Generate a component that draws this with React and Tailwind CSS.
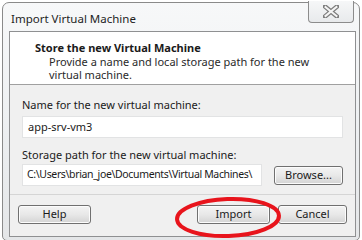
import React from "react";

const Btn = ({ children, className = "" }) => (
  <div
    className={
      "h-[19px] rounded-[3px] border border-[#707070] bg-gradient-to-b from-[#f4f4f4] via-[#e8e8e8] to-[#d4d4d4] flex items-center justify-center text-[11px] text-[#1a1a1a] shadow-[inset_0_0_0_1px_#fcfcfc] " +
      className
    }
  >
    {children}
  </div>
);

export default function App() {
  return (
    <div
      className="w-[362px] h-[240px] bg-white relative overflow-hidden"
      style={{ fontFamily: '"Noto Sans", "Open Sans", sans-serif' }}
    >
      <div className="absolute left-[2px] top-[2px] w-[358px] h-[239px] rounded-t-[7px] rounded-b-[5px] border border-[#8a8a8a] bg-gradient-to-b from-[#f7f8f9] via-[#eef0f2] to-[#e4e6e8] flex flex-col">
        <div className="h-[28px] flex justify-between items-start shrink-0">
          <div className="pl-[8px] pt-[7px] text-[11.5px] text-[#1e1e1e] leading-[18px]">
            Import Virtual Machine
          </div>
        </div>
        <div className="ml-[6px] mr-[3px] h-[206px] border border-[#8f9092] flex flex-col">
          <div className="h-[53px] bg-white border-b border-[#a0a0a0] shrink-0">
            <div className="pl-[25px] pt-[8px] text-[11px] font-bold leading-[15px] text-[#1a1a1a]">
              Store the new Virtual Machine
            </div>
            <div className="pl-[39px] text-[11px] leading-[13px] text-[#2a2a2a] w-[300px]">
              Provide a name and local storage path for the new virtual machine.
            </div>
          </div>
          <div className="flex-1 bg-[#f0f0f0] flex flex-col">
            <div className="px-[12px] pt-[12px]">
              <div className="text-[11px] leading-[15px] text-[#1a1a1a]">
                Name for the new virtual machine:
              </div>
              <div className="mt-[4px] h-[22px] bg-white border border-[#e2e3e4] flex items-center pl-[5px] text-[11px] text-[#1a1a1a]">
                app-srv-vm3
              </div>
              <div className="mt-[9px] text-[11px] leading-[15px] text-[#1a1a1a]">
                Storage path for the new virtual machine:
              </div>
              <div className="mt-[2px] flex items-center gap-[12px]">
                <div className="w-[240px] h-[22px] bg-white border border-[#e2e3e4] flex items-center pl-[4px] text-[10.5px] tracking-[-0.35px] text-[#1a1a1a] whitespace-nowrap overflow-hidden">
                  C:\Users\brian_joe\Documents\Virtual Machines\
                </div>
                <Btn className="w-[69px]">Browse...</Btn>
              </div>
            </div>
            <div className="mt-[8px] border-t border-[#d5d5d5]" />
            <div className="px-[8px] pt-[10px] flex items-center">
              <Btn className="w-[73px]">Help</Btn>
              <div className="flex-1" />
              <Btn className="w-[73px]">Import</Btn>
              <Btn className="w-[69px] ml-[8px]">Cancel</Btn>
            </div>
          </div>
        </div>
      </div>
      {/* close button */}
      <div className="absolute left-[308px] top-[1px] w-[46px] h-[22px] rounded-b-[4px] border border-[#8c8c8c] border-t-0 bg-gradient-to-b from-[#f6f7f8] to-[#e8eaec] flex items-center justify-center">
        <svg width="16" height="13" viewBox="0 0 16 13">
          <path
            d="M2 1.5 L14 11.5 M14 1.5 L2 11.5"
            stroke="#7c7c7c"
            strokeWidth="4.5"
            strokeLinecap="square"
            fill="none"
          />
          <path
            d="M2.5 2 L13.5 11 M13.5 2 L2.5 11"
            stroke="#f4f4f4"
            strokeWidth="2"
            strokeLinecap="square"
            fill="none"
          />
        </svg>
      </div>
      {/* red highlight ellipse */}
      <svg
        className="absolute left-[172px] top-[195px]"
        width="112"
        height="45"
        viewBox="0 0 112 45"
      >
        <ellipse
          cx="56"
          cy="22.5"
          rx="51"
          ry="18.5"
          fill="none"
          stroke="#e8141c"
          strokeWidth="4"
          transform="rotate(-2 56 22.5)"
        />
      </svg>
    </div>
  );
}
